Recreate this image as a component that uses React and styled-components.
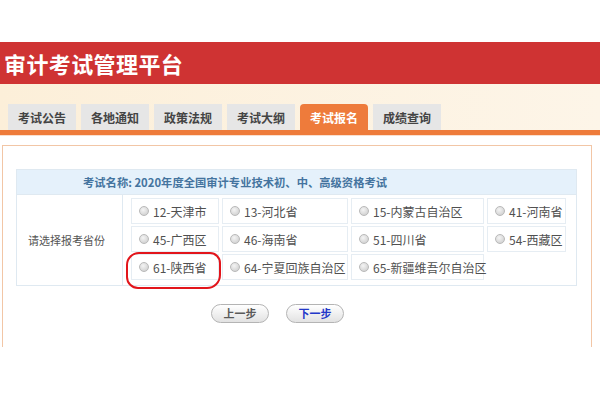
import React from "react";
import styled, { createGlobalStyle } from "styled-components";

const Global = createGlobalStyle`
  html, body { margin: 0; padding: 0; background: #ffffff; }
  body { font-family: "Noto Sans CJK SC", "Noto Sans", sans-serif; width: 600px; height: 400px; overflow: hidden; }
`;

const Page = styled.div`
  padding-top: 42px;
`;

const Header = styled.div`
  height: 42px;
  background: #cf3333;
  display: flex;
  align-items: center;
  padding-left: 4px;
`;

const Title = styled.h1`
  margin: 0;
  color: #ffffff;
  font-size: 22px;
  font-weight: 700;
  letter-spacing: 0.4px;
  line-height: 1;
`;

const TabBand = styled.div`
  height: 46px;
  background: linear-gradient(to right, #fcefd9, #fdf5e8);
  display: flex;
  align-items: flex-end;
  gap: 5px;
  padding-left: 8px;
  border-bottom: 5px solid #ee7b3b;
`;

const Tab = styled.div`
  width: 68px;
  height: 26px;
  display: flex;
  align-items: center;
  justify-content: center;
  font-size: 12px;
  font-weight: 700;
  color: ${(p) => (p.$active ? "#ffffff" : "#444444")};
  background: ${(p) => (p.$active ? "#ee7b3b" : "#e6e6e6")};
  border-radius: ${(p) => (p.$active ? "4px 4px 0 0" : "0")};
`;

const Hairline = styled.div`
  height: 1px;
  background: #f9dfcf;
  margin-bottom: 9px;
`;

const Panel = styled.div`
  margin-left: 2px;
  width: 590px;
  height: 202px;
  border: 1px solid #f2c6a6;
  border-bottom: none;
  box-sizing: border-box;
  padding: 23px 16px 0 13px;
`;

const Table = styled.div`
  border: 1px solid #dfe9f1;
  width: 561px;
  box-sizing: border-box;
`;

const HeadRow = styled.div`
  height: 24px;
  background: #e5f1fb;
  display: flex;
  align-items: center;
  padding-left: 66px;
  font-size: 11.3px;
  font-weight: 700;
  color: #44749f;
`;

const Body = styled.div`
  display: grid;
  grid-template-columns: 106px 1fr;
  border-top: 1px solid #dfe9f1;
`;

const LabelCell = styled.div`
  display: flex;
  align-items: center;
  padding-left: 11px;
  font-size: 11px;
  color: #555555;
  border-right: 1px solid #dfe9f1;
`;

const Options = styled.div`
  display: grid;
  grid-template-columns: 88px 126px 133px 79px;
  grid-auto-rows: 26px;
  gap: 2px 3px;
  padding: 3px 8px 5px 8px;
`;

const Option = styled.label`
  position: relative;
  display: flex;
  align-items: center;
  border: 1px solid #e6edf3;
  background: #ffffff;
  font-size: 12px;
  color: #505050;
  padding-left: 7px;
  white-space: nowrap;
`;

const Radio = styled.span`
  width: 8px;
  height: 8px;
  border-radius: 50%;
  border: 1px solid #b9b9b9;
  background: radial-gradient(circle at 40% 35%, #f4f4f4, #c9c9c9);
  margin-right: 4px;
  flex: none;
`;

const Highlight = styled.span`
  position: absolute;
  left: -6px;
  top: -3px;
  right: -3px;
  bottom: -10px;
  border: 2.5px solid #e2151b;
  border-radius: 13px 11px 14px 12px;
  pointer-events: none;
`;

const Buttons = styled.div`
  display: flex;
  gap: 17px;
  padding-left: 195px;
  margin-top: 18px;
`;

const Button = styled.button`
  width: 58px;
  height: 19px;
  border-radius: 10px;
  border: 1px solid #b4b4b4;
  background: linear-gradient(#ffffff, #e2e2e2);
  font-family: inherit;
  font-size: 11px;
  font-weight: 700;
  color: ${(p) => (p.$primary ? "#2338c9" : "#5a5a5a")};
  padding: 0;
  line-height: 17px;
`;

const tabs = ["考试公告", "各地通知", "政策法规", "考试大纲", "考试报名", "成绩查询"];
const options = [
  "12-天津市", "13-河北省", "15-内蒙古自治区", "41-河南省",
  "45-广西区", "46-海南省", "51-四川省", "54-西藏区",
  "61-陕西省", "64-宁夏回族自治区", "65-新疆维吾尔自治区",
];

export default function App() {
  return (
    <Page>
      <Global />
      <Header>
        <Title>审计考试管理平台</Title>
      </Header>
      <TabBand>
        {tabs.map((t) => (
          <Tab key={t} $active={t === "考试报名"}>{t}</Tab>
        ))}
      </TabBand>
      <Hairline />
      <Panel>
        <Table>
          <HeadRow>考试名称: 2020年度全国审计专业技术初、中、高级资格考试</HeadRow>
          <Body>
            <LabelCell>请选择报考省份</LabelCell>
            <Options>
              {options.map((o) => (
                <Option key={o}>
                  <Radio />
                  {o}
                  {o === "61-陕西省" && <Highlight />}
                </Option>
              ))}
            </Options>
          </Body>
        </Table>
        <Buttons>
          <Button>上一步</Button>
          <Button $primary>下一步</Button>
        </Buttons>
      </Panel>
    </Page>
  );
}
